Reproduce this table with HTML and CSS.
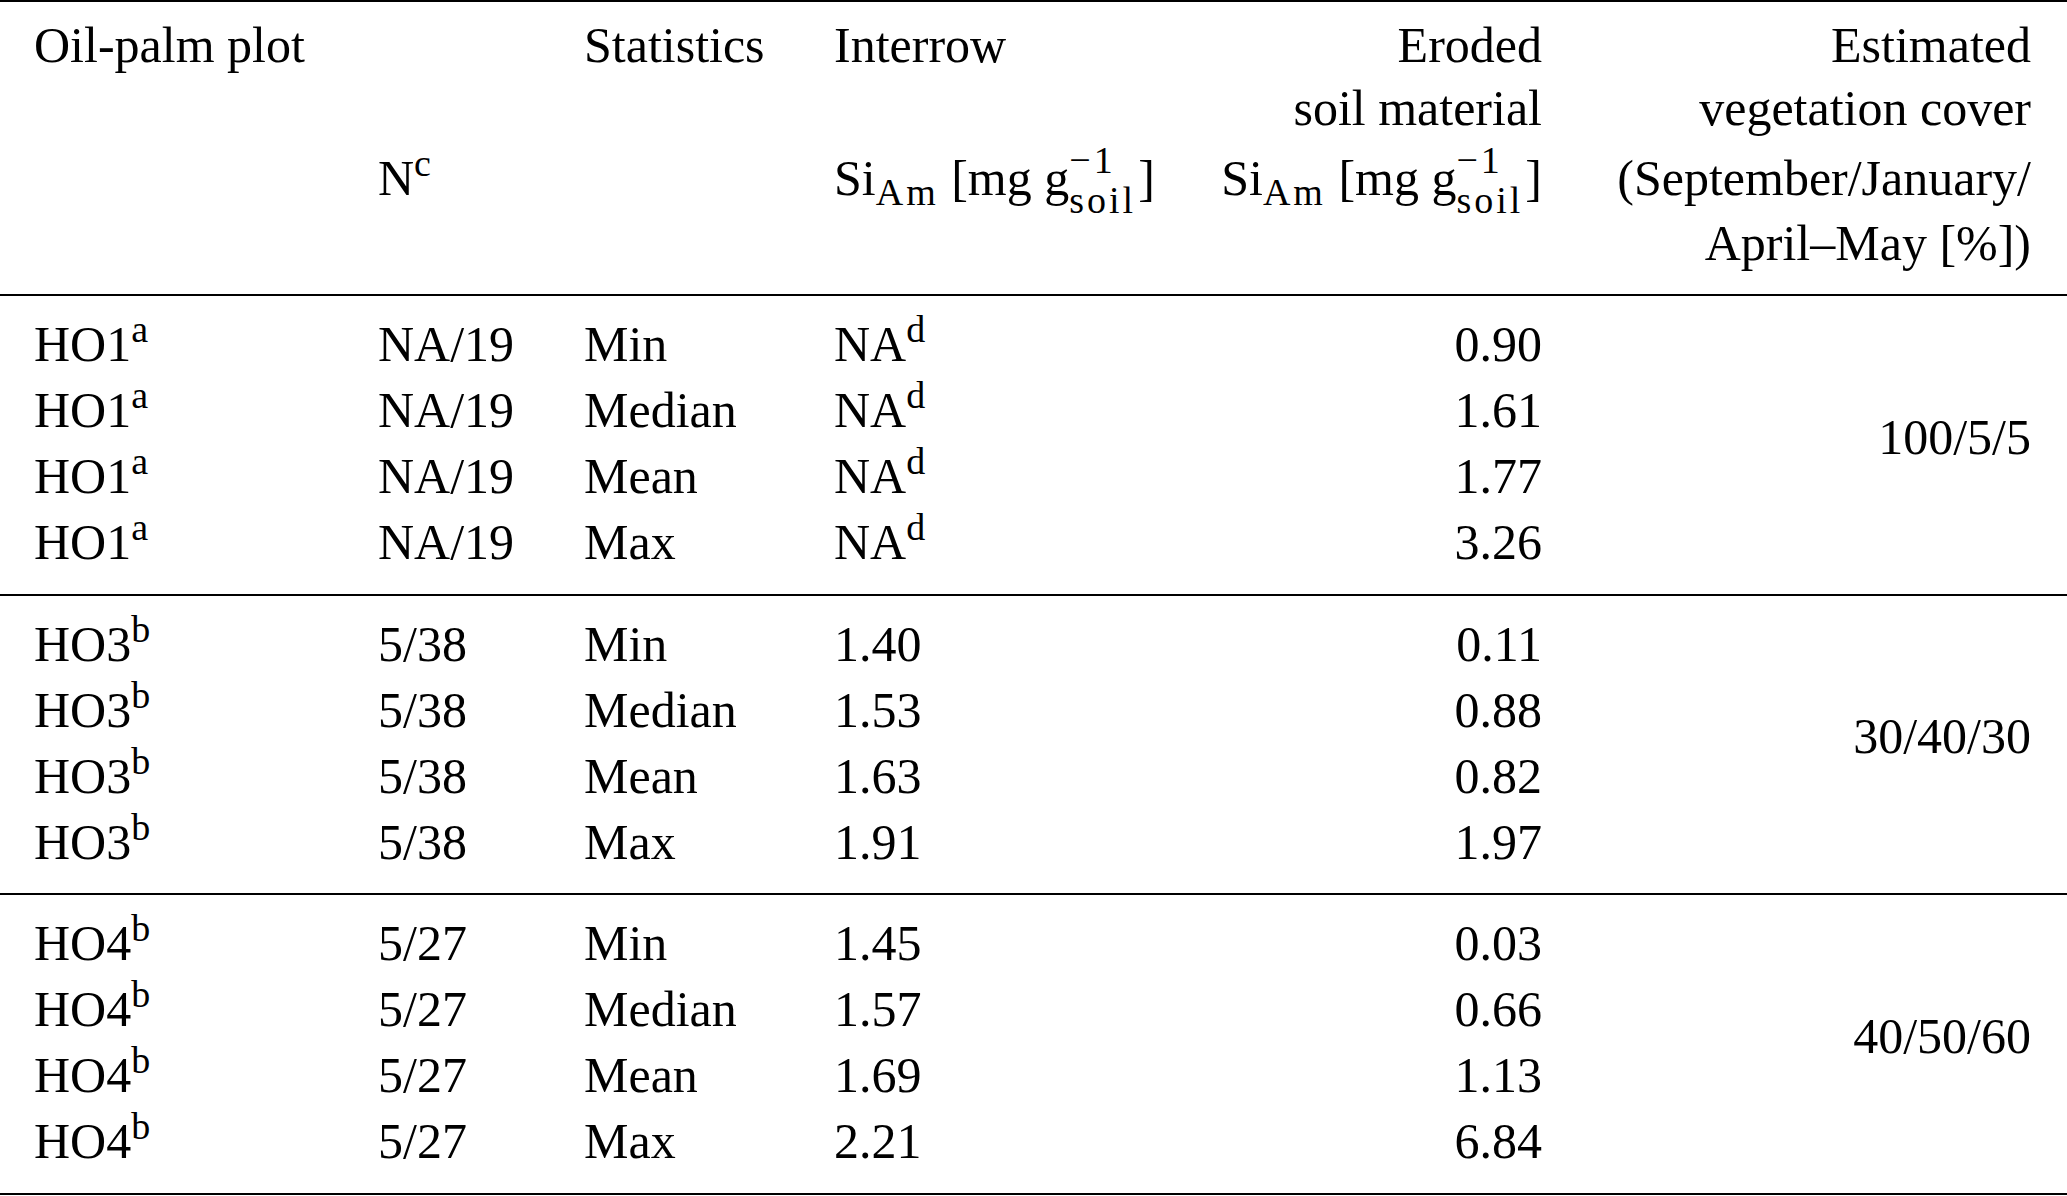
FILE: index.html
```html
<!DOCTYPE html>
<html lang="en">
<head>
<meta charset="utf-8">
<title>Oil-palm plot SiAm statistics</title>
<link rel="stylesheet" href="styles.css">
</head>
<body>
<div class="table">
  <div class="head">
    <div class="c1">Oil-palm plot</div>
    <div></div>
    <div>Statistics</div>
    <div>Interrow</div>
    <div class="r">Eroded</div>
    <div class="c6">Estimated</div>

    <div class="c1"></div>
    <div></div>
    <div></div>
    <div></div>
    <div class="r">soil material</div>
    <div class="c6">vegetation cover</div>

    <div class="c1"></div>
    <div>N<span class="sup">c</span></div>
    <div></div>
    <div>Si<span class="sub">Am</span> [mg g<span class="stack"><span class="hi">−1</span><span>soil</span></span>]</div>
    <div class="r">Si<span class="sub">Am</span> [mg g<span class="stack"><span class="hi">−1</span><span>soil</span></span>]</div>
    <div class="c6">(September/January/</div>

    <div class="c1"></div>
    <div></div>
    <div></div>
    <div></div>
    <div class="r"></div>
    <div class="c6">April–May [%])</div>
  </div>

  <div class="group">
    <div class="c6 veg">100/5/5</div>
    <div class="c1">HO1<span class="sup">a</span></div><div>NA/19</div><div>Min</div><div>NA<span class="sup">d</span></div><div class="r">0.90</div>
    <div class="c1">HO1<span class="sup">a</span></div><div>NA/19</div><div>Median</div><div>NA<span class="sup">d</span></div><div class="r">1.61</div>
    <div class="c1">HO1<span class="sup">a</span></div><div>NA/19</div><div>Mean</div><div>NA<span class="sup">d</span></div><div class="r">1.77</div>
    <div class="c1">HO1<span class="sup">a</span></div><div>NA/19</div><div>Max</div><div>NA<span class="sup">d</span></div><div class="r">3.26</div>
  </div>

  <div class="group">
    <div class="c6 veg">30/40/30</div>
    <div class="c1">HO3<span class="sup">b</span></div><div>5/38</div><div>Min</div><div>1.40</div><div class="r">0.11</div>
    <div class="c1">HO3<span class="sup">b</span></div><div>5/38</div><div>Median</div><div>1.53</div><div class="r">0.88</div>
    <div class="c1">HO3<span class="sup">b</span></div><div>5/38</div><div>Mean</div><div>1.63</div><div class="r">0.82</div>
    <div class="c1">HO3<span class="sup">b</span></div><div>5/38</div><div>Max</div><div>1.91</div><div class="r">1.97</div>
  </div>

  <div class="group">
    <div class="c6 veg">40/50/60</div>
    <div class="c1">HO4<span class="sup">b</span></div><div>5/27</div><div>Min</div><div>1.45</div><div class="r">0.03</div>
    <div class="c1">HO4<span class="sup">b</span></div><div>5/27</div><div>Median</div><div>1.57</div><div class="r">0.66</div>
    <div class="c1">HO4<span class="sup">b</span></div><div>5/27</div><div>Mean</div><div>1.69</div><div class="r">1.13</div>
    <div class="c1">HO4<span class="sup">b</span></div><div>5/27</div><div>Max</div><div>2.21</div><div class="r">6.84</div>
  </div>
</div>
</body>
</html>
```

FILE: styles.css
```css
html, body {
  margin: 0;
  padding: 0;
  background: #fff;
}

body {
  font-family: "Liberation Serif", "Times New Roman", serif;
  font-size: 50px;
  color: #000;
}

.table {
  width: 2067px;
  border-top: 2px solid #000;
}

.head,
.group {
  display: grid;
  grid-template-columns: 378px 206px 250px 366px 342px 525px;
  border-bottom: 2px solid #000;
  white-space: nowrap;
}

.head {
  grid-template-rows: 63px 70px 65px 64px;
  line-height: 64px;
  padding: 11px 0 19px;
}

.group {
  grid-template-rows: repeat(4, 66px);
  line-height: 66px;
  padding: 15px 0 18.5px;
}

.c1 {
  padding-left: 34px;
}

.r {
  text-align: right;
}

.c6 {
  text-align: right;
  padding-right: 36px;
}

.veg {
  grid-column: 6;
  grid-row: 1 / span 4;
  align-self: center;
  padding-bottom: 13px;
}

.sup {
  font-size: 38px;
  letter-spacing: 1px;
  line-height: 0;
  vertical-align: 19px;
}

.sub {
  font-size: 38px;
  letter-spacing: 3px;
  line-height: 0;
  vertical-align: -10px;
}

.stack {
  display: inline-block;
  font-size: 38px;
  letter-spacing: 3px;
  line-height: 26px;
  vertical-align: -18px;
  text-align: left;
  margin-right: 2px;
}

.stack > span {
  display: block;
}

.stack .hi {
  margin-bottom: 14px;
}
```
